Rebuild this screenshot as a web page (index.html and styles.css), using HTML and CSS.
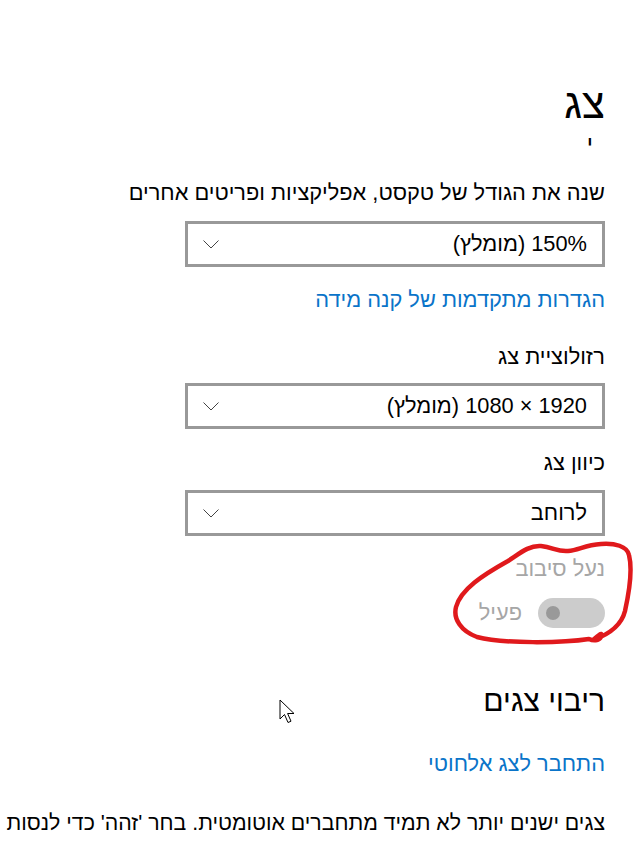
FILE: index.html
```html
<!DOCTYPE html>
<html lang="he" dir="rtl">
<head>
<meta charset="utf-8">
<link rel="stylesheet" href="styles.css">
<title>צג</title>
</head>
<body>
<main class="page">
  <h1 class="title">צג</h1>
  <div class="stray">י</div>

  <div class="label label-first">שנה את הגודל של טקסט, אפליקציות ופריטים אחרים</div>
  <div class="select select-first">
    <span class="select-value">150% (מומלץ)</span>
    <svg class="chevron" width="16" height="9" viewBox="0 0 16 9"><path d="M0.5 0.5 L8 8 L15.5 0.5" fill="none" stroke="#444" stroke-width="1"/></svg>
  </div>

  <a class="link link-scale" href="#">הגדרות מתקדמות של קנה מידה</a>

  <div class="label label-res">רזולוציית צג</div>
  <div class="select select-res">
    <span class="select-value">1920 × 1080 (מומלץ)</span>
    <svg class="chevron" width="16" height="9" viewBox="0 0 16 9"><path d="M0.5 0.5 L8 8 L15.5 0.5" fill="none" stroke="#444" stroke-width="1"/></svg>
  </div>

  <div class="label label-orient">כיוון צג</div>
  <div class="select select-orient">
    <span class="select-value">לרוחב</span>
    <svg class="chevron" width="16" height="9" viewBox="0 0 16 9"><path d="M0.5 0.5 L8 8 L15.5 0.5" fill="none" stroke="#444" stroke-width="1"/></svg>
  </div>

  <div class="lock">
    <div class="label label-disabled">נעל סיבוב</div>
    <div class="toggle-row">
      <span class="toggle"><span class="knob"></span></span>
      <span class="toggle-text">פעיל</span>
    </div>
  </div>

  <h2 class="subtitle">ריבוי צגים</h2>

  <a class="link link-wireless" href="#">התחבר לצג אלחוטי</a>

  <p class="para">צגים ישנים יותר לא תמיד מתחברים אוטומטית. בחר 'זהה' כדי לנסות</p>

  <svg class="scribble" width="190" height="110" viewBox="0 0 190 110">
    <path d="M140 99 C146 94 150 90 148 96 C146 100 140 100 136 98 C110 102 50 103 24 96 C8 90 0 78 3 66 C8 48 30 34 55 20 C66 13 76 4 88 5 C100 6 104 11 115 10 C126 9 132 4 148 3 C162 2 174 5 176 14 C180 30 176 52 172 70 C169 82 160 92 140 99" fill="none" stroke="#e0191c" stroke-width="4.5" stroke-linecap="round" stroke-linejoin="round"/>
  </svg>

  <svg class="cursor" width="20" height="28" viewBox="0 0 20 28">
    <path d="M1 1 L1 20 L5.5 15.5 L9 23.5 L12 22.2 L8.6 14.5 L15 14.5 Z" fill="#fff" stroke="#000" stroke-width="1" stroke-linejoin="miter"/>
  </svg>
</main>
</body>
</html>
```
FILE: styles.css
```css
html, body {
  margin: 0;
  padding: 0;
  background: #fff;
}
body {
  width: 641px;
  height: 842px;
  overflow: hidden;
}
.page {
  position: relative;
  direction: rtl;
  padding: 0 36px 0 0;
  font-family: "Liberation Sans", "DejaVu Sans", sans-serif;
  color: #000;
  font-size: 21.8px;
  height: 842px;
  overflow: hidden;
}
.title {
  margin: 0;
  padding-top: 78px;
  font-size: 42px;
  font-weight: normal;
  line-height: 52px;
  height: 52px;
}
.stray {
  font-size: 24px;
  line-height: 24px;
  height: 24px;
  padding-right: 12px;
  margin-top: 2px;
}
.label {
  line-height: 28px;
  height: 28px;
  white-space: nowrap;
}
.label-first { margin-top: 23px; }
.label-res { margin-top: 29px; }
.label-orient { margin-top: 20px; }
.select {
  box-sizing: border-box;
  width: 420px;
  height: 46px;
  margin-top: 10px;
  border: 3px solid #999;
  display: flex;
  align-items: center;
  justify-content: space-between;
  padding: 0 15px 0 15px;
  background: #fff;
}
.select-first { margin-top: 14px; }
.select-res { margin-top: 12px; }
.select-orient { margin-top: 13px; }
.select-value {
  white-space: nowrap;
}
.chevron { display: block; }
.link {
  display: block;
  color: #0a74c9;
  text-decoration: none;
  line-height: 28px;
  height: 28px;
  white-space: nowrap;
}
.link-scale { margin-top: 19px; }
.lock {
  margin-top: 19px;
}
.label-disabled { color: #a6a6a6; }
.toggle-row {
  display: flex;
  align-items: center;
  gap: 16px;
  margin-top: 15px;
}
.toggle {
  position: relative;
  display: block;
  width: 67px;
  height: 30px;
  border-radius: 15px;
  background: #cccccc;
}
.knob {
  position: absolute;
  left: 8px;
  top: 8px;
  width: 14px;
  height: 14px;
  border-radius: 50%;
  background: #999;
}
.toggle-text { color: #a6a6a6; }
.subtitle {
  margin: 53px 0 0 0;
  font-size: 30px;
  font-weight: normal;
  line-height: 40px;
}
.link-wireless { margin-top: 29px; }
.para {
  margin: 31px 0 0 0;
  white-space: nowrap;
  line-height: 28px;
  font-size: 21.3px;
}
.scribble {
  position: absolute;
  left: 453px;
  top: 541px;
}
.cursor {
  position: absolute;
  left: 279px;
  top: 699px;
}
```
